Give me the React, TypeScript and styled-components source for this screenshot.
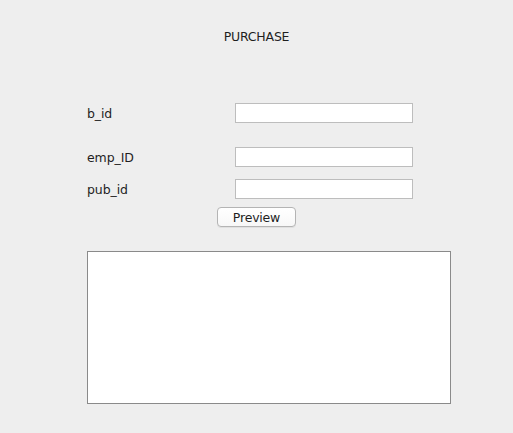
import styled, { createGlobalStyle } from "styled-components";

const GlobalStyle = createGlobalStyle`
  html, body {
    margin: 0;
    padding: 0;
    background: #eeeeee;
  }
  body {
    font-family: "DejaVu Sans", "Noto Sans", sans-serif;
    color: #1e1e1e;
  }
`;

const fields = [
  { label: "b_id", gap: 0 },
  { label: "emp_ID", gap: 24 },
  { label: "pub_id", gap: 12 },
];

const App = () => {
  return (
    <>
      <GlobalStyle />
      <Window>
        <Title>PURCHASE</Title>
        <Form>
          {fields.map((f) => (
            <FieldRow key={f.label} gap={f.gap}>
              <Label>{f.label}</Label>
              <TextField type="text" />
            </FieldRow>
          ))}
          <ButtonRow>
            <PreviewButton>Preview</PreviewButton>
          </ButtonRow>
        </Form>
        <Output />
      </Window>
    </>
  );
};

export default App;

const Window = styled.div`
  width: 513px;
  height: 433px;
  box-sizing: border-box;
  padding: 29px 0 0 87px;
  display: flex;
  flex-direction: column;
`;

const Title = styled.div`
  width: 339px;
  text-align: center;
  font-size: 12.5px;
  line-height: 15px;
  letter-spacing: -0.2px;
`;

const Form = styled.div`
  display: flex;
  flex-direction: column;
  margin-top: 59px;
`;

const FieldRow = styled.div<{ gap: number }>`
  display: grid;
  grid-template-columns: 148px 178px;
  align-items: center;
  height: 20px;
  margin-top: ${(p) => p.gap}px;
`;

const Label = styled.span`
  font-size: 12.5px;
  letter-spacing: -0.1px;
`;

const TextField = styled.input`
  box-sizing: border-box;
  width: 178px;
  height: 20px;
  margin: 0;
  border: 1px solid #bdbdbd;
  background: #ffffff;
  outline: none;
`;

const ButtonRow = styled.div`
  display: flex;
  padding-left: 130px;
  margin-top: 8px;
`;

const PreviewButton = styled.button`
  box-sizing: border-box;
  width: 79px;
  height: 20px;
  padding: 0;
  border: 1px solid #b4b4b4;
  border-radius: 4px;
  background: linear-gradient(#ffffff, #f7f7f7);
  box-shadow: 0 1px 0 rgba(0, 0, 0, 0.06);
  font-family: "DejaVu Sans", "Noto Sans", sans-serif;
  font-size: 12.5px;
  letter-spacing: -0.2px;
  color: #1e1e1e;
`;

const Output = styled.div`
  box-sizing: border-box;
  width: 364px;
  height: 153px;
  margin-top: 24px;
  background: #ffffff;
  border: 1px solid #8a8a8a;
`;
